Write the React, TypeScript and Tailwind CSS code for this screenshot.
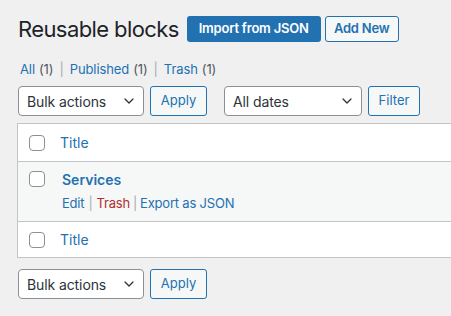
import React from "react";

const Chevron = () => (
  <svg width="16" height="16" viewBox="0 0 20 20" fill="none" className="shrink-0">
    <path d="M5 7.5l5 5 5-5" stroke="#2c3338" strokeWidth="1.6" strokeLinecap="round" strokeLinejoin="round" />
  </svg>
);

const Select = ({ label, w }: { label: string; w: string }) => (
  <div className={`${w} h-[30px] flex items-center justify-between bg-white border border-[#8c8f94] rounded-[4px] pl-[8px] pr-[6px] text-[14px] text-[#2c3338] tracking-[-0.1px]`}>
    <span>{label}</span>
    <Chevron />
  </div>
);

const SecButton = ({ label, w }: { label: string; w: string }) => (
  <div className={`${w} h-[30px] flex items-center justify-center bg-[#f6f7f7] border border-[#2271b1] rounded-[3px] text-[13px] text-[#2271b1]`}>
    {label}
  </div>
);

const Checkbox = () => (
  <div className="w-[16px] h-[16px] bg-white border border-[#8c8f94] rounded-[4px] shrink-0" />
);

export default function App() {
  return (
    <div
      className="w-[451px] h-[316px] overflow-hidden bg-[#f0f0f1] pl-[18px] pt-[16px]"
      style={{ fontFamily: "Inter, 'Liberation Sans', sans-serif" }}
    >
      <div className="flex items-center h-[26px]">
        <h1 className="text-[22px] leading-[26px] text-[#1d2327] font-normal tracking-[-0.6px]">Reusable blocks</h1>
        <div className="ml-[8px] w-[134px] h-[26px] flex items-center justify-center bg-[#2271b1] rounded-[3px] text-white text-[13px] font-semibold tracking-[-0.2px]">
          Import from JSON
        </div>
        <div className="ml-[4px] w-[74px] h-[26px] flex items-center justify-center bg-[#f6f7f7] border border-[#2271b1] rounded-[3px] text-[#2271b1] text-[13px] font-semibold tracking-[-0.2px]">
          Add New
        </div>
      </div>

      <div className="mt-[20px] ml-[2px] h-[14px] flex items-center text-[13px] leading-[14px] text-[#50575e] tracking-[-0.1px]">
        <span className="text-[#2271b1]">All</span>
        <span className="ml-[4px]">(1)</span>
        <span className="mx-[6px] text-[#a7aaad]">|</span>
        <span className="text-[#2271b1]">Published</span>
        <span className="ml-[4px]">(1)</span>
        <span className="mx-[6px] text-[#a7aaad]">|</span>
        <span className="text-[#2271b1]">Trash</span>
        <span className="ml-[4px]">(1)</span>
      </div>

      <div className="mt-[10px] flex items-center">
        <Select label="Bulk actions" w="w-[126px]" />
        <div className="ml-[6px]"><SecButton label="Apply" w="w-[57px]" /></div>
        <div className="ml-[17px]"><Select label="All dates" w="w-[138px]" /></div>
        <div className="ml-[6px]"><SecButton label="Filter" w="w-[52px]" /></div>
      </div>

      <div className="mt-[7px] -ml-[1px] w-[500px] border border-[#c3c4c7] bg-white">
        <div className="h-[37px] flex items-center pl-[11px]">
          <Checkbox />
          <span className="ml-[15px] text-[14px] text-[#2271b1]">Title</span>
        </div>
        <div className="h-[60px] bg-[#f6f7f7] border-t border-[#c3c4c7] pl-[11px] pt-[8px]">
          <div className="flex items-center h-[18px]">
            <Checkbox />
            <span className="ml-[17px] text-[14px] font-semibold text-[#2271b1]">Services</span>
          </div>
          <div className="mt-[6px] ml-[33px] text-[13px] text-[#a7aaad] flex items-center tracking-[-0.2px]">
            <span className="text-[#2271b1]">Edit</span>
            <span className="mx-[4px]">|</span>
            <span className="text-[#b32d2e]">Trash</span>
            <span className="mx-[3px]">|</span>
            <span className="text-[#2271b1]">Export as JSON</span>
          </div>
        </div>
        <div className="h-[36px] flex items-center pl-[11px] border-t border-[#c3c4c7]">
          <Checkbox />
          <span className="ml-[15px] text-[14px] text-[#2271b1]">Title</span>
        </div>
      </div>

      <div className="mt-[11px] flex items-center">
        <Select label="Bulk actions" w="w-[126px]" />
        <div className="ml-[6px]"><SecButton label="Apply" w="w-[57px]" /></div>
      </div>
    </div>
  );
}
